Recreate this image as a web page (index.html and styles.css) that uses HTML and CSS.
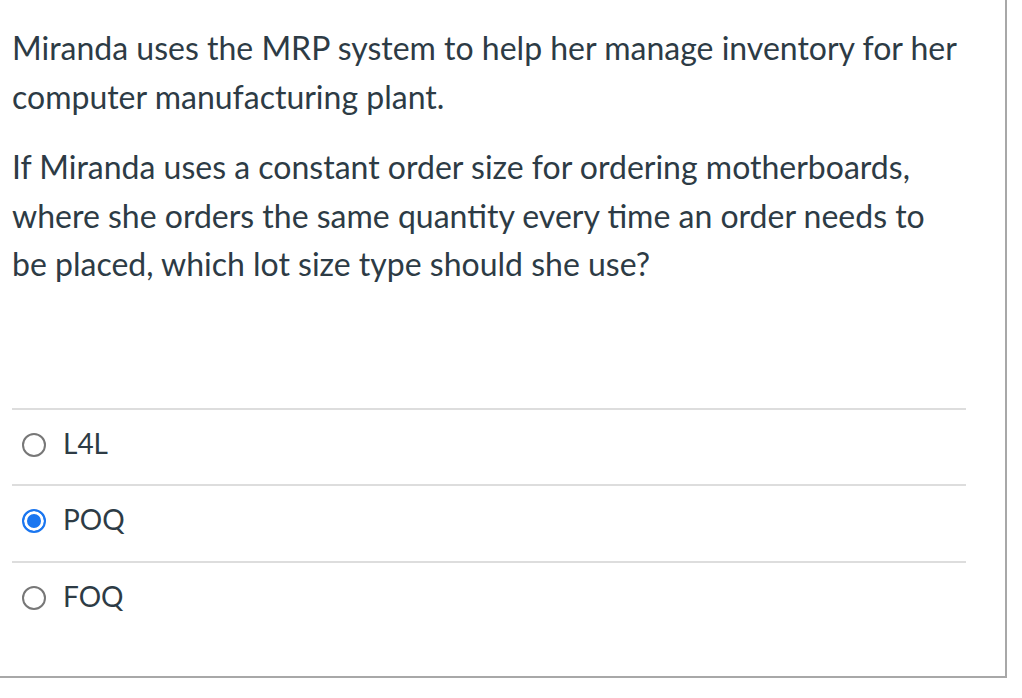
FILE: index.html
```html
<!DOCTYPE html>
<html>
<head>
<meta charset="utf-8">
<link rel="stylesheet" href="styles.css">
</head>
<body>
<div class="question">
  <div class="question-text">
    <p>Miranda uses the MRP system to help her manage inventory for her computer manufacturing plant.</p>
    <p>If Miranda uses a constant order size for ordering motherboards, where she orders the same quantity every time an order needs to be placed, which lot size type should she use?</p>
  </div>
  <div class="answers">
    <label class="answer"><span class="radio"></span><span class="label">L4L</span></label>
    <label class="answer"><span class="radio checked"></span><span class="label">POQ</span></label>
    <label class="answer"><span class="radio"></span><span class="label">FOQ</span></label>
  </div>
</div>
</body>
</html>
```
FILE: styles.css
```css
html, body {
  margin: 0;
  padding: 0;
  background: #ffffff;
}
body {
  font-family: Lato, "Open Sans", sans-serif;
  color: #2d3b45;
}
.question {
  width: 1005px;
  height: 676px;
  border-right: 2px solid #a8a8a8;
  border-bottom: 2px solid #a8a8a8;
  box-sizing: content-box;
}
.question-text {
  padding: 24px 0 0 12px;
  width: 955px;
  font-size: 32px;
  line-height: 48.5px;
}
.question-text p {
  margin: 0 0 22px 0;
}
.answers {
  margin: 119px 0 0 12px;
  width: 954px;
}
.answer {
  display: flex;
  align-items: center;
  box-sizing: border-box;
  height: 76.5px;
  padding-bottom: 8px;
  border-top: 2px solid #dddddd;
  font-size: 28px;
}
.radio {
  width: 20px;
  height: 20px;
  border: 2px solid #777777;
  border-radius: 50%;
  margin-left: 10px;
  margin-right: 17px;
  margin-top: 4px;
  box-sizing: content-box;
  background: #fff;
}
.radio.checked {
  border-color: #1a76f0;
  background: #1a76f0;
  box-shadow: inset 0 0 0 3px #ffffff;
}
```
